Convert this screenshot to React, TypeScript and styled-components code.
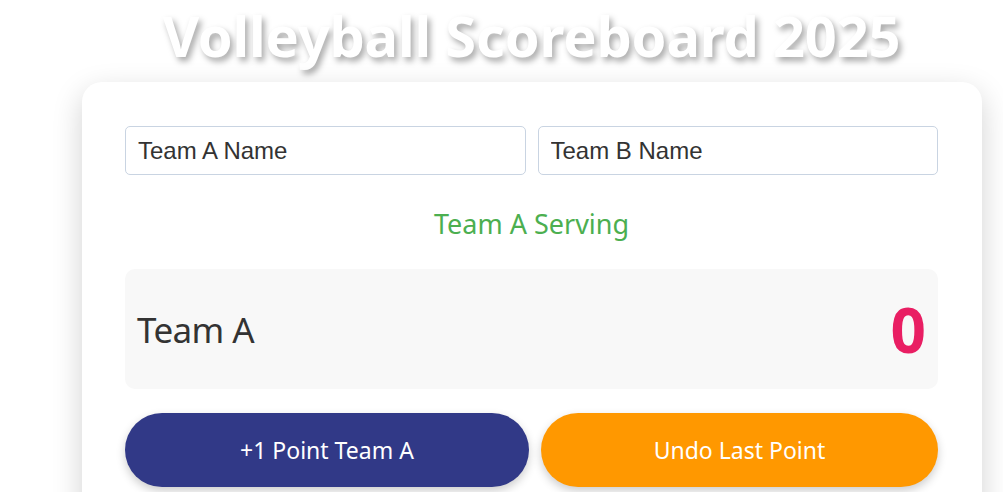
import React from "react";
import styled, { createGlobalStyle } from "styled-components";

const Global = createGlobalStyle`
  html, body { margin: 0; padding: 0; background: #ffffff; }
  body { font-family: "Noto Sans", "Open Sans", sans-serif; overflow: hidden; }
`;

const Page = styled.div`
  width: 1003px;
  height: 492px;
  overflow: hidden;
  display: flex;
  flex-direction: column;
  align-items: flex-start;
`;

const Title = styled.h1`
  margin: -4px 0 0 0;
  width: 1063px;
  text-align: center;
  font-family: "Noto Sans", "Open Sans", sans-serif;
  font-weight: 700;
  font-size: 56px;
  line-height: 78px;
  letter-spacing: -0.2px;
  color: #ffffff;
  text-shadow: 3px 4px 6px rgba(0, 0, 0, 0.35);
`;

const Card = styled.div`
  margin: 8px 0 0 82px;
  width: 900px;
  box-sizing: border-box;
  background: #ffffff;
  border-radius: 20px;
  padding: 44px 44px 40px 43px;
  box-shadow: 0 10px 30px rgba(0, 0, 0, 0.18);
  display: flex;
  flex-direction: column;
`;

const InputRow = styled.div`
  display: flex;
  gap: 12px;
`;

const NameInput = styled.input`
  flex: 1;
  min-width: 0;
  height: 49px;
  box-sizing: border-box;
  border: 1px solid #c9d4e2;
  border-radius: 5px;
  padding: 0 12px;
  font-family: "Liberation Sans", Arial, sans-serif;
  font-size: 24px;
  color: #333333;
  background: #ffffff;
  &::placeholder { color: #333333; }
`;

const Serving = styled.div`
  margin-top: 31px;
  text-align: center;
  color: #4caf50;
  font-size: 27px;
  line-height: 36px;
`;

const ScorePanel = styled.div`
  margin-top: 27px;
  height: 120px;
  background: #f8f8f8;
  border-radius: 10px;
  display: flex;
  align-items: center;
  justify-content: space-between;
  padding: 0 12px 0 12px;
`;

const TeamName = styled.span`
  font-size: 35px;
  color: #333333;
  letter-spacing: -0.6px;
`;

const Score = styled.span`
  font-size: 62px;
  font-weight: 700;
  color: #e91e63;
`;

const ButtonRow = styled.div`
  margin-top: 24px;
  display: flex;
  gap: 12px;
`;

const ActionButton = styled.button<{ $bg: string; $grow: number }>`
  flex: ${(p) => p.$grow};
  height: 74px;
  border: none;
  border-radius: 37px;
  background: ${(p) => p.$bg};
  color: #ffffff;
  font-family: "Noto Sans", "Open Sans", sans-serif;
  font-size: 23px;
  box-shadow: 0 4px 10px rgba(0, 0, 0, 0.2);
  cursor: pointer;
`;

export default function App() {
  return (
    <>
      <Global />
      <Page>
        <Title>Volleyball Scoreboard 2025</Title>
        <Card>
          <InputRow>
            <NameInput placeholder="Team A Name" />
            <NameInput placeholder="Team B Name" />
          </InputRow>
          <Serving>Team A Serving</Serving>
          <ScorePanel>
            <TeamName>Team A</TeamName>
            <Score>0</Score>
          </ScorePanel>
          <ButtonRow>
            <ActionButton $bg="#313987" $grow={404}>+1 Point Team A</ActionButton>
            <ActionButton $bg="#ff9800" $grow={397}>Undo Last Point</ActionButton>
          </ButtonRow>
        </Card>
      </Page>
    </>
  );
}
